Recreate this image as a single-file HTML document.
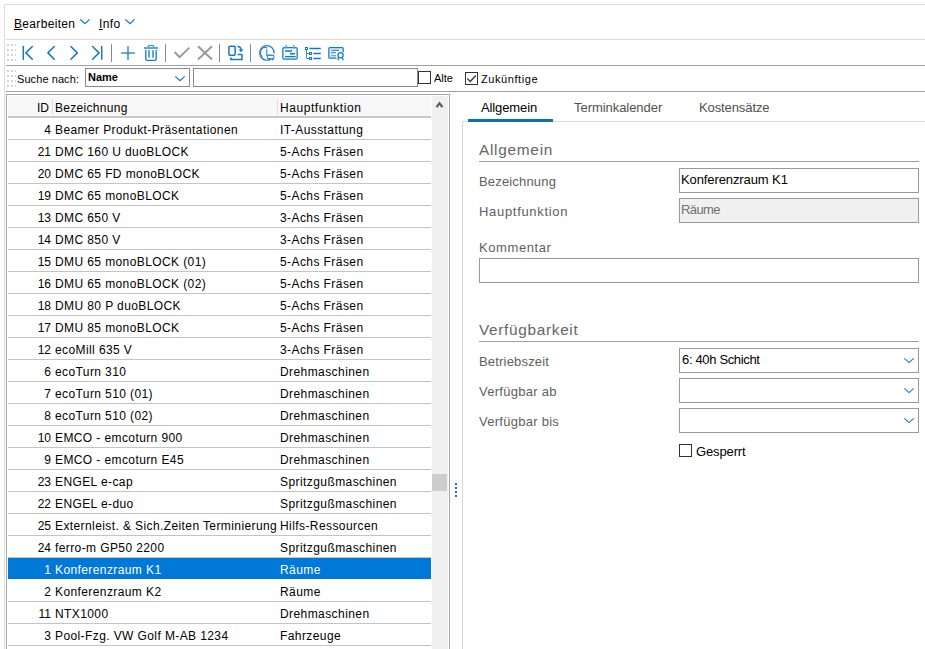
<!DOCTYPE html>
<html><head><meta charset="utf-8">
<style>
*{margin:0;padding:0;box-sizing:border-box}
html,body{width:925px;height:649px;overflow:hidden;background:#fff}
body{position:relative;font-family:"Liberation Sans",sans-serif;font-size:12px;color:#000}
.a{position:absolute}
.t{position:absolute;white-space:nowrap;line-height:12px}
.hl{position:absolute;height:1px}
.vl{position:absolute;width:1px}
.row{position:absolute;left:8px;width:423px;height:21px}
.row.sel{background:#0078d7;color:#fff}
.rsep{position:absolute;left:8px;width:423px;height:1px;background:#c4c4c4}
.cid{position:absolute;right:380px;top:6px;line-height:12px;white-space:nowrap}
.cb{position:absolute;left:47px;top:6px;line-height:12px;white-space:nowrap}
.cc{position:absolute;left:272px;top:6px;line-height:12px;white-space:nowrap}
.inp{position:absolute;border:1px solid #999;background:#fff}
.cbx{position:absolute;width:13px;height:13px;border:1px solid #333;background:#fff}
.lbl{position:absolute;white-space:nowrap;line-height:12px;color:#606060;font-size:13px}
.sec{position:absolute;white-space:nowrap;line-height:16px;color:#666;font-size:15.4px}
.grip{position:absolute;width:2px;height:2px;background:#d2d2d2}
.cb{letter-spacing:0.4px}.cc{letter-spacing:0.42px}</style></head><body>
<!-- window border -->
<div class="hl" style="left:4px;top:4px;width:921px;background:#dcdcdc"></div>
<div class="vl" style="left:4px;top:4px;height:645px;background:#dcdcdc"></div>

<!-- menu -->
<div class="t" id="menu1" style="letter-spacing:0.33px;left:14px;top:18px;color:#000"><u>B</u>earbeiten</div>
<svg class="a" style="left:80px;top:19px" width="11" height="6"><path d="M0.3 0.4 L5 4.6 L9.6 0.4" fill="none" stroke="#1479c0" stroke-width="1.2"/></svg>
<div class="t" id="menu2" style="letter-spacing:0.4px;left:99px;top:18px;color:#000"><u>I</u>nfo</div>
<svg class="a" style="left:125px;top:19px" width="11" height="6"><path d="M0.3 0.4 L5 4.6 L9.6 0.4" fill="none" stroke="#1479c0" stroke-width="1.2"/></svg>

<div class="hl" style="left:6px;top:39px;width:919px;background:#dadada"></div>

<!-- toolbar -->
<div class="grip" style="left:7px;top:44px"></div><div class="grip" style="left:11px;top:44px"></div><div class="grip" style="left:15px;top:44px;width:1px"></div><div class="grip" style="left:7px;top:49px"></div><div class="grip" style="left:11px;top:49px"></div><div class="grip" style="left:15px;top:49px;width:1px"></div><div class="grip" style="left:7px;top:54px"></div><div class="grip" style="left:11px;top:54px"></div><div class="grip" style="left:15px;top:54px;width:1px"></div><div class="grip" style="left:7px;top:59px"></div><div class="grip" style="left:11px;top:59px"></div><div class="grip" style="left:15px;top:59px;width:1px"></div>
<svg class="a" style="left:0;top:0" width="360" height="66" shape-rendering="geometricPrecision">
 <g fill="none" stroke="#1479c0" stroke-width="1.5" stroke-linecap="round" stroke-linejoin="round">
  <path d="M23.3 46.5 V59.3"/><path d="M32.3 46.5 L25.9 52.9 L32.3 59.3"/>
  <path d="M54.3 46.5 L47.9 52.9 L54.3 59.3"/>
  <path d="M70.9 46.5 L77.3 52.9 L70.9 59.3"/>
  <path d="M92.6 46.5 L99 52.9 L92.6 59.3"/><path d="M101.7 46.5 V59.3"/>
 </g>
 <g fill="none" stroke="#68acd9" stroke-width="2">
  <path d="M121 53 H135"/><path d="M128 46 V60"/>
 </g><rect x="127" y="52" width="2" height="2" fill="#2f8bcb"/>
 <g stroke="#8a8a8a" stroke-width="1"><path d="M111.5 44 V62"/><path d="M165.5 44 V62"/><path d="M219.5 44 V62"/><path d="M250.5 44 V62"/></g>
 <g fill="none" stroke-linecap="butt">
  <path d="M144 48 H158" stroke="#5ba6d8" stroke-width="2"/>
  <path d="M148 47 L149 45.5 H153 L154 47" stroke="#2b88c8" stroke-width="1.2"/>
  <path d="M145.8 50 V59 Q145.8 60.3 147.2 60.3 H154.8 Q156.2 60.3 156.2 59 V50" stroke="#1479c0" stroke-width="1.3"/>
  <path d="M149 50.2 V57.8 M153 50.2 V57.8" stroke="#5ba6d8" stroke-width="2"/>
 </g>
 <g fill="none" stroke="#999" stroke-width="1.9" stroke-linecap="butt">
  <path d="M174.6 52 L179.6 57.2 L189.4 47.6"/>
  <path d="M198 46.3 L212 59.5 M212 46.3 L198 59.5"/>
 </g>
 <g fill="none" stroke="#1479c0" stroke-width="1.5" stroke-linejoin="round">
  <rect x="228.9" y="46.3" width="6.2" height="9" rx="1"/>
  <path d="M230.8 57.5 V59.6 H242 V54.5 H237.6"/>
  <path d="M237.5 46.4 Q241 46.4 241 50"/>
 </g>
 <path d="M238.6 49.4 H243.5 L241 52.2 Z" fill="#1479c0"/>
 <g fill="none" stroke="#2580c4" stroke-width="1.2">
  <path d="M272 58.2 A7.3 7.3 0 1 1 274.2 53.5"/>
  <path d="M262.6 57 A5.3 5.3 0 0 1 267 47.6" stroke-width="1"/>
  <path d="M266.7 48.8 V55.3 H272.5" stroke="#5aa5d8" stroke-width="1.5"/>
  <path d="M267.6 55.4 H273.8 V58.6 H267.6 Z" stroke="#3b90cf" stroke-width="1.1" fill="#fff"/>
  <circle cx="269.3" cy="59.6" r="0.9" fill="#2580c4" stroke="none"/><circle cx="272.6" cy="59.6" r="0.9" fill="#2580c4" stroke="none"/>
 </g>
 <g fill="none" stroke="#1479c0" stroke-width="1.25">
  <rect x="282.8" y="47.7" width="14.4" height="11.5" rx="1.5" fill="#eef4f9"/>
  <path d="M286.2 45 V48.8 M293.8 45 V48.8" stroke="#6aafdc" stroke-width="1.6"/>
  <path d="M285 51 H292 M290 53.7 H294.8 M285 56.6 H295.6" stroke-width="1.4"/>
 </g>
 <g fill="none" stroke="#1479c0" stroke-width="1">
  <rect x="305.5" y="47.5" width="2" height="2" stroke-width="1"/>
  <rect x="309.5" y="52.5" width="2" height="2" stroke-width="1"/>
  <rect x="309.5" y="57.5" width="2" height="2" stroke-width="1"/>
  <path d="M306.5 50 V58.5 H309 M306.5 53.5 H309" stroke="#3b90cf"/>
  <path d="M309.3 48.5 H320.8 M313.3 53.5 H320.8 M313.3 58.5 H320.8" stroke-width="1.3"/>
 </g>
 <g fill="none" stroke="#1479c0" stroke-width="1.3">
  <path d="M329.5 48.3 H342.3 V52 M329.5 48.3 V57.6 H336.5" fill="#e3edf5" stroke="none"/>
  <path d="M336.5 58.2 H329.9 Q328.9 58.2 328.9 57.2 V48.5 Q328.9 47.6 329.9 47.6 H342.2 Q343.2 47.6 343.2 48.5 V52.2"/>
  <path d="M331.2 50.4 H339 M331.2 52.6 H336 M331.2 55.8 H336" stroke="#3a92cf" stroke-width="1.1"/>
  <circle cx="340.5" cy="55.3" r="2.6" fill="#fff"/>
  <path d="M338.7 57.5 L337.8 60.3 M342.3 57.5 L343.3 60.3" stroke-width="1.2"/>
 </g>
</svg>
<div class="hl" style="left:6px;top:65px;width:919px;background:#a0a0a0"></div>

<!-- search bar -->
<div class="grip" style="left:7px;top:70px"></div><div class="grip" style="left:11px;top:70px"></div><div class="grip" style="left:15px;top:70px;width:1px"></div><div class="grip" style="left:7px;top:75px"></div><div class="grip" style="left:11px;top:75px"></div><div class="grip" style="left:15px;top:75px;width:1px"></div><div class="grip" style="left:7px;top:80px"></div><div class="grip" style="left:11px;top:80px"></div><div class="grip" style="left:15px;top:80px;width:1px"></div><div class="grip" style="left:7px;top:85px"></div><div class="grip" style="left:11px;top:85px"></div><div class="grip" style="left:15px;top:85px;width:1px"></div>
<div class="t" id="suche" style="letter-spacing:0.08px;left:17px;top:73px;font-size:11px;color:#000">Suche nach:</div>
<div class="inp" style="left:85px;top:68px;width:105px;height:19px;border-color:#8a8a8a"></div>
<div class="t" id="name" style="left:88px;top:71px;font-weight:bold;font-size:11px">Name</div>
<svg class="a" style="left:175px;top:75px" width="11" height="7"><path d="M0.2 1.4 L5 5.6 L9.7 1.4" fill="none" stroke="#1479c0" stroke-width="1.2"/></svg>
<div class="inp" style="left:193px;top:68px;width:225px;height:19px;border-color:#8a8a8a"></div>
<div class="cbx" style="left:418px;top:71px"></div>
<div class="t" id="alte" style="left:434px;top:72px;font-size:11px">Alte</div>
<div class="cbx" style="left:465px;top:72px"></div>
<svg class="a" style="left:465px;top:72px" width="13" height="13"><path d="M2.3 6.6 L5.2 9.4 L10.8 3.4" fill="none" stroke="#3a3a3a" stroke-width="1.4"/></svg>
<div class="t" id="zuk" style="letter-spacing:0.58px;left:481px;top:73px;font-size:11px">Zukünftige</div>
<div class="hl" style="left:6px;top:91px;width:919px;background:#a0a0a0"></div>

<!-- grid -->
<div class="a" style="left:6px;top:94px;width:444px;height:600px;border:1px solid #a5a5ad"></div>
<div class="a" style="left:8px;top:96px;width:423px;height:20px;background:#f8f8f8"></div>
<div class="a" style="left:8px;top:116px;width:423px;height:2px;background:#c8c8c8"></div>
<div class="vl" style="left:52px;top:99px;height:16px;background:#dedede"></div>
<div class="vl" style="left:277px;top:99px;height:16px;background:#dedede"></div>
<div class="t" id="hID" style="right:876px;top:102px">ID</div>
<div class="t" id="hBez" style="letter-spacing:0.3px;left:55px;top:102px">Bezeichnung</div>
<div class="t" id="hHaupt" style="letter-spacing:0.57px;left:280px;top:102px">Hauptfunktion</div>
<div class="a" style="left:432px;top:96px;width:16px;height:560px;background:#f0f0f0"></div>
<svg class="a" style="left:432px;top:96px" width="16" height="17"><path d="M4.6 11.2 L7.5 7.2 L10.4 11.2" fill="none" stroke="#555" stroke-width="2.1"/></svg>
<div class="a" style="left:432px;top:474px;width:15px;height:17px;background:#cdcdcd"></div>
<div class="row" style="top:118px"><span class="cid" id="r0a">4</span><span class="cb" id="r0b">Beamer Produkt-Präsentationen</span><span class="cc" id="r0c">IT-Ausstattung</span></div>
<div class="rsep" style="top:139px"></div>
<div class="row" style="top:140px"><span class="cid" id="r1a">21</span><span class="cb" id="r1b">DMC 160 U duoBLOCK</span><span class="cc" id="r1c">5-Achs Fräsen</span></div>
<div class="rsep" style="top:161px"></div>
<div class="row" style="top:162px"><span class="cid" id="r2a">20</span><span class="cb" id="r2b">DMC 65 FD monoBLOCK</span><span class="cc" id="r2c">5-Achs Fräsen</span></div>
<div class="rsep" style="top:183px"></div>
<div class="row" style="top:184px"><span class="cid" id="r3a">19</span><span class="cb" id="r3b">DMC 65 monoBLOCK</span><span class="cc" id="r3c">5-Achs Fräsen</span></div>
<div class="rsep" style="top:205px"></div>
<div class="row" style="top:206px"><span class="cid" id="r4a">13</span><span class="cb" id="r4b">DMC 650 V</span><span class="cc" id="r4c">3-Achs Fräsen</span></div>
<div class="rsep" style="top:227px"></div>
<div class="row" style="top:228px"><span class="cid" id="r5a">14</span><span class="cb" id="r5b">DMC 850 V</span><span class="cc" id="r5c">3-Achs Fräsen</span></div>
<div class="rsep" style="top:249px"></div>
<div class="row" style="top:250px"><span class="cid" id="r6a">15</span><span class="cb" id="r6b">DMU 65 monoBLOCK (01)</span><span class="cc" id="r6c">5-Achs Fräsen</span></div>
<div class="rsep" style="top:271px"></div>
<div class="row" style="top:272px"><span class="cid" id="r7a">16</span><span class="cb" id="r7b">DMU 65 monoBLOCK (02)</span><span class="cc" id="r7c">5-Achs Fräsen</span></div>
<div class="rsep" style="top:293px"></div>
<div class="row" style="top:294px"><span class="cid" id="r8a">18</span><span class="cb" id="r8b">DMU 80 P duoBLOCK</span><span class="cc" id="r8c">5-Achs Fräsen</span></div>
<div class="rsep" style="top:315px"></div>
<div class="row" style="top:316px"><span class="cid" id="r9a">17</span><span class="cb" id="r9b">DMU 85 monoBLOCK</span><span class="cc" id="r9c">5-Achs Fräsen</span></div>
<div class="rsep" style="top:337px"></div>
<div class="row" style="top:338px"><span class="cid" id="r10a">12</span><span class="cb" id="r10b">ecoMill 635 V</span><span class="cc" id="r10c">3-Achs Fräsen</span></div>
<div class="rsep" style="top:359px"></div>
<div class="row" style="top:360px"><span class="cid" id="r11a">6</span><span class="cb" id="r11b">ecoTurn 310</span><span class="cc" id="r11c">Drehmaschinen</span></div>
<div class="rsep" style="top:381px"></div>
<div class="row" style="top:382px"><span class="cid" id="r12a">7</span><span class="cb" id="r12b">ecoTurn 510 (01)</span><span class="cc" id="r12c">Drehmaschinen</span></div>
<div class="rsep" style="top:403px"></div>
<div class="row" style="top:404px"><span class="cid" id="r13a">8</span><span class="cb" id="r13b">ecoTurn 510 (02)</span><span class="cc" id="r13c">Drehmaschinen</span></div>
<div class="rsep" style="top:425px"></div>
<div class="row" style="top:426px"><span class="cid" id="r14a">10</span><span class="cb" id="r14b">EMCO - emcoturn 900</span><span class="cc" id="r14c">Drehmaschinen</span></div>
<div class="rsep" style="top:447px"></div>
<div class="row" style="top:448px"><span class="cid" id="r15a">9</span><span class="cb" id="r15b">EMCO - emcoturn E45</span><span class="cc" id="r15c">Drehmaschinen</span></div>
<div class="rsep" style="top:469px"></div>
<div class="row" style="top:470px"><span class="cid" id="r16a">23</span><span class="cb" id="r16b">ENGEL e-cap</span><span class="cc" id="r16c">Spritzgußmaschinen</span></div>
<div class="rsep" style="top:491px"></div>
<div class="row" style="top:492px"><span class="cid" id="r17a">22</span><span class="cb" id="r17b">ENGEL e-duo</span><span class="cc" id="r17c">Spritzgußmaschinen</span></div>
<div class="rsep" style="top:513px"></div>
<div class="row" style="top:514px"><span class="cid" id="r18a">25</span><span class="cb" id="r18b">Externleist. &amp; Sich.Zeiten Terminierung</span><span class="cc" id="r18c">Hilfs-Ressourcen</span></div>
<div class="rsep" style="top:535px"></div>
<div class="row" style="top:536px"><span class="cid" id="r19a">24</span><span class="cb" id="r19b">ferro-m GP50 2200</span><span class="cc" id="r19c">Spritzgußmaschinen</span></div>
<div class="rsep" style="top:557px"></div>
<div class="row sel" style="top:558px"><span class="cid" id="r20a">1</span><span class="cb" id="r20b">Konferenzraum K1</span><span class="cc" id="r20c">Räume</span></div>
<div class="row" style="top:580px"><span class="cid" id="r21a">2</span><span class="cb" id="r21b">Konferenzraum K2</span><span class="cc" id="r21c">Räume</span></div>
<div class="rsep" style="top:601px"></div>
<div class="row" style="top:602px"><span class="cid" id="r22a">11</span><span class="cb" id="r22b">NTX1000</span><span class="cc" id="r22c">Drehmaschinen</span></div>
<div class="rsep" style="top:623px"></div>
<div class="row" style="top:624px"><span class="cid" id="r23a">3</span><span class="cb" id="r23b">Pool-Fzg. VW Golf M-AB 1234</span><span class="cc" id="r23c">Fahrzeuge</span></div>
<div class="rsep" style="top:645px"></div>

<!-- splitter -->
<div class="a" style="left:455px;top:483px;width:2px;height:2px;background:#1670c0"></div>
<div class="a" style="left:455px;top:487px;width:2px;height:2px;background:#1670c0"></div>
<div class="a" style="left:455px;top:491px;width:2px;height:2px;background:#1670c0"></div>
<div class="a" style="left:455px;top:495px;width:2px;height:2px;background:#1670c0"></div>

<!-- tabs -->
<div class="vl" style="left:462px;top:121px;height:528px;background:#d9d9d9"></div>
<div class="hl" style="left:462px;top:121px;width:463px;background:#d9d9d9"></div>
<div class="a" style="left:468px;top:119px;width:85px;height:3px;background:#0a70b8"></div>
<div class="t" id="tab1" style="letter-spacing:-0.12px;left:481px;top:102px;font-size:13px;color:#000">Allgemein</div>
<div class="t" id="tab2" style="letter-spacing:-0.05px;left:574px;top:102px;font-size:13px;color:#505050">Terminkalender</div>
<div class="t" id="tab3" style="letter-spacing:-0.1px;left:699px;top:102px;font-size:13px;color:#505050">Kostensätze</div>

<div class="sec" id="sec1" style="letter-spacing:0.72px;left:479px;top:142px">Allgemein</div>
<div class="hl" style="left:479px;top:161px;width:440px;background:#a0a0a0"></div>
<div class="lbl" id="l1" style="letter-spacing:0.17px;left:479px;top:176px">Bezeichnung</div>
<div class="inp" style="left:679px;top:168px;width:240px;height:25px"></div>
<div class="t" id="v1" style="letter-spacing:-0.1px;left:681px;top:174px;font-size:13px">Konferenzraum K1</div>
<div class="lbl" id="l2" style="letter-spacing:0.69px;left:479px;top:206px">Hauptfunktion</div>
<div class="inp" style="left:679px;top:198px;width:240px;height:25px;background:#f0f0f0"></div>
<div class="t" id="v2" style="letter-spacing:-0.6px;left:681px;top:204px;font-size:13px;color:#707070">Räume</div>
<div class="lbl" id="l3" style="letter-spacing:0.59px;left:479px;top:242px">Kommentar</div>
<div class="inp" style="left:479px;top:258px;width:440px;height:25px"></div>

<div class="sec" id="sec2" style="letter-spacing:0.67px;left:479px;top:322px">Verfügbarkeit</div>
<div class="hl" style="left:479px;top:341px;width:440px;background:#a0a0a0"></div>
<div class="lbl" id="l4" style="letter-spacing:0.18px;left:479px;top:356px">Betriebszeit</div>
<div class="inp" style="left:679px;top:348px;width:240px;height:25px"></div>
<div class="t" id="v3" style="letter-spacing:-0.34px;left:682px;top:354px;font-size:13px">6: 40h Schicht</div>
<svg class="a" style="left:903px;top:357px" width="12" height="7"><path d="M1.3 1.3 L6.1 5.6 L10.7 1.3" fill="none" stroke="#1a7cc2" stroke-width="1.1"/></svg>
<div class="lbl" id="l5" style="letter-spacing:0.27px;left:479px;top:386px">Verfügbar ab</div>
<div class="inp" style="left:679px;top:378px;width:240px;height:25px"></div>
<svg class="a" style="left:903px;top:387px" width="12" height="7"><path d="M1.3 1.3 L6.1 5.6 L10.7 1.3" fill="none" stroke="#1a7cc2" stroke-width="1.1"/></svg>
<div class="lbl" id="l6" style="letter-spacing:0.27px;left:479px;top:416px">Verfügbar bis</div>
<div class="inp" style="left:679px;top:408px;width:240px;height:25px"></div>
<svg class="a" style="left:903px;top:417px" width="12" height="7"><path d="M1.3 1.3 L6.1 5.6 L10.7 1.3" fill="none" stroke="#1a7cc2" stroke-width="1.1"/></svg>
<div class="cbx" style="left:679px;top:444px"></div>
<div class="t" id="gesp" style="letter-spacing:-0.13px;left:696px;top:446px;font-size:13px">Gesperrt</div>
</body></html>
